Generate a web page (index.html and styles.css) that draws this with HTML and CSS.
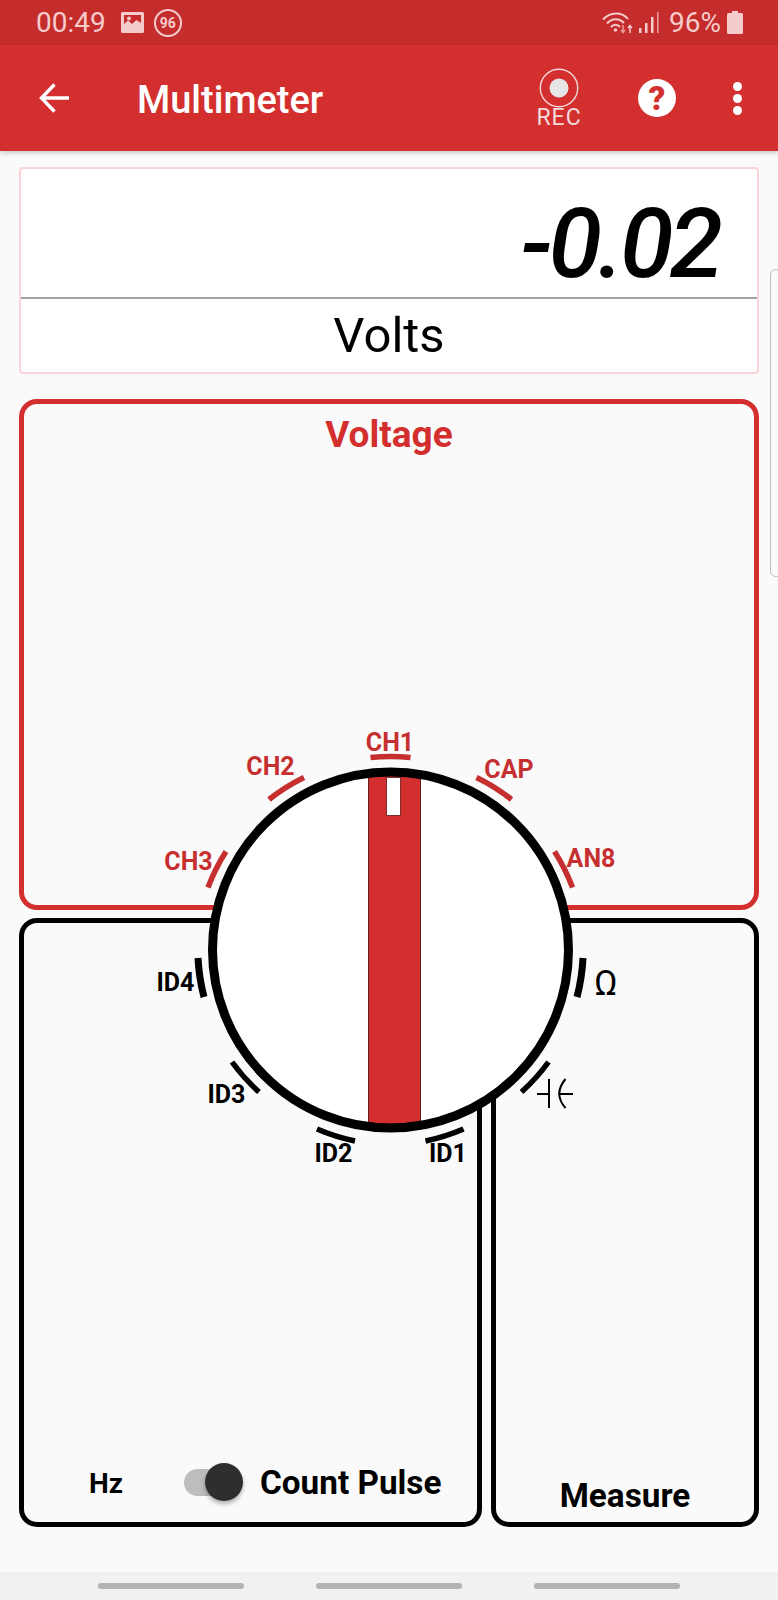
FILE: index.html
```html
<!DOCTYPE html>
<html lang="en">

<head>
    <meta charset="UTF-8">
    <link rel="stylesheet" href="styles.css">
    <title>Multimeter</title>
</head>

<body>
    <div class="status-bar">
        <div class="status-left">
            <span class="clock">00:49</span>
            <svg class="pic-icon" width="23" height="21" viewBox="0 0 23 21">
                <path d="M1.5 0H21.5Q23 0 23 1.5V19.5Q23 21 21.5 21H1.5Q0 21 0 19.5V1.5Q0 0 1.5 0ZM3 3V12L7 8.5L11 12L15.5 8L20 11V3Z" fill="#F6CBCB" fill-rule="evenodd"/>
                <circle cx="8" cy="6.5" r="2" fill="#F6CBCB"/>
            </svg>
            <span class="badge">96</span>
        </div>
        <div class="status-right">
            <svg width="32" height="22" viewBox="0 0 32 22" fill="none" stroke="#F6CBCB">
                <path d="M1 7.5C8 -0.5 20 -0.5 26 7" stroke-width="2"/>
                <path d="M5 11.5C10 6 17 6 22 11" stroke-width="2"/>
                <path d="M9 15C11.5 12 15.5 12 18 15" stroke-width="2"/>
                <circle cx="13.5" cy="18" r="1.8" fill="#F6CBCB" stroke="none"/>
                <path d="M21 13V20M19 18L21 20.5L23 18" stroke="#E89A9A" stroke-width="1.5"/>
                <path d="M28 21V14M26 16L28 13.5L30 16" stroke="#F6CBCB" stroke-width="1.5"/>
            </svg>
            <svg class="signal" width="20" height="21" viewBox="0 0 20 21">
                <rect x="0" y="16" width="2.5" height="5" fill="#F6CBCB"/>
                <rect x="6" y="11" width="2.5" height="10" fill="#F6CBCB"/>
                <rect x="12" y="5" width="2.5" height="16" fill="#F6CBCB"/>
                <rect x="18" y="0" width="1.6" height="21" fill="#E89A9A"/>
            </svg>
            <span class="battery-text">96%</span>
            <svg width="16" height="23" viewBox="0 0 16 23">
                <path d="M5 0H11V2H14.5Q16 2 16 3.5V21.5Q16 23 14.5 23H1.5Q0 23 0 21.5V3.5Q0 2 1.5 2H5Z" fill="#F6CBCB"/>
            </svg>
        </div>
    </div>

    <header class="toolbar">
        <svg class="back-icon" width="30" height="30" viewBox="0 0 30 30" fill="none" stroke="#fff" stroke-width="3.4">
            <path d="M30 15H3M15.5 1.5L2.5 15L15.5 28.5"/>
        </svg>
        <h1 class="title">Multimeter</h1>
        <div class="rec">
            <svg width="40" height="40" viewBox="0 0 40 40">
                <circle cx="20" cy="20" r="18.7" fill="none" stroke="#F4DADA" stroke-width="1.4"/>
                <circle cx="20" cy="20" r="9.5" fill="#E6E6E6"/>
            </svg>
            <span class="rec-text">REC</span>
        </div>
        <div class="help">?</div>
        <div class="more">
            <span class="dot"></span>
            <span class="dot"></span>
            <span class="dot"></span>
        </div>
    </header>

    <main class="content">
        <section class="display">
            <div class="reading">-0.02</div>
            <div class="unit">Volts</div>
        </section>

        <section class="panel panel-voltage">
            <h2 class="panel-title">Voltage</h2>
        </section>

        <div class="lower">
            <section class="panel panel-freq">
                <span class="hz">Hz</span>
                <div class="switch">
                    <span class="switch-track"></span>
                    <span class="switch-thumb"></span>
                </div>
                <span class="count">Count Pulse</span>
            </section>
            <section class="panel panel-measure">
                <span class="measure">Measure</span>
            </section>
        </div>

        <svg class="dial" width="500" height="460" viewBox="140 720 500 460">
            <defs>
                <clipPath id="knob-clip">
                    <circle cx="390.5" cy="950" r="176"/>
                </clipPath>
            </defs>

            <circle cx="390.5" cy="950" r="178" fill="#fff"/>
            <g clip-path="url(#knob-clip)">
                <rect x="368.5" y="760" width="52" height="380" fill="#D32F2F" stroke="#5c2020" stroke-width="1"/>
            </g>
            <rect x="386.5" y="777.5" width="14" height="38" fill="#fff" stroke="#7a3030" stroke-width="1"/>
            <circle cx="390.5" cy="950" r="178" fill="none" stroke="#000" stroke-width="9"/>
            <path d="M368 1122Q390 1126 421 1121L421 1130L368 1130Z" fill="#000"/>

            <g class="ticks-red">
                <path d="M370.5 757.5A193 193 0 0 1 410.5 757.5"/>
                <path d="M269 799.5A193 193 0 0 1 304 777.5"/>
                <path d="M476.5 777.5A193 193 0 0 1 511.5 799.5"/>
                <path d="M554.5 851.5A193 193 0 0 1 572.5 887.5"/>
                <path d="M208 887.5A193 193 0 0 1 226 851.5"/>
            </g>
            <g class="ticks-black">
                <path class="wide" d="M198 958A193 193 0 0 0 204 997"/>
                <path class="wide" d="M583 958A193 193 0 0 1 577 997"/>
                <path d="M232 1062A193 193 0 0 0 259 1092"/>
                <path d="M548.5 1062A193 193 0 0 1 521.5 1092"/>
                <path d="M317 1129A193 193 0 0 0 355 1141"/>
                <path d="M463.5 1129A193 193 0 0 1 425.5 1141"/>
            </g>

            <text class="dial-label red" x="390" y="751">CH1</text>
            <text class="dial-label red" x="270.5" y="775">CH2</text>
            <text class="dial-label red" x="509" y="778">CAP</text>
            <text class="dial-label red" x="188.5" y="870">CH3</text>
            <text class="dial-label red" x="591" y="867">AN8</text>
            <text class="dial-label" x="175.5" y="991">ID4</text>
            <text class="dial-label" x="226.5" y="1103">ID3</text>
            <text class="dial-label" x="333.5" y="1162">ID2</text>
            <text class="dial-label" x="448" y="1162">ID1</text>
            <text class="ohm" x="606" y="995">Ω</text>

            <g fill="none" stroke="#000" stroke-width="2">
                <path d="M537 1094H549M549 1079V1108"/>
                <path d="M565.5 1079Q553 1094 565.5 1108M560 1094H573"/>
            </g>
        </svg>

        <div class="side-handle"></div>
    </main>

    <div class="nav-bar">
        <span class="nav-pill"></span>
        <span class="nav-pill"></span>
        <span class="nav-pill"></span>
    </div>
</body>

</html>
```

FILE: styles.css
```css
html,
body {
    margin: 0;
    padding: 0;
}

body {
    width: 778px;
    height: 1600px;
    display: flex;
    flex-direction: column;
    overflow: hidden;
    background-color: #FAFAFA;
    font-family: Roboto, sans-serif;
    color: #000;
}

.status-bar {
    height: 45px;
    flex: none;
    display: flex;
    justify-content: space-between;
    align-items: center;
    padding: 0 35px 0 36px;
    background-color: #C52C2C;
    color: #F6CBCB;
    box-sizing: border-box;
}

.status-left,
.status-right {
    display: flex;
    align-items: center;
}

.clock {
    font-size: 28px;
    line-height: 45px;
    margin-right: 15px;
}

.badge {
    width: 28px;
    height: 28px;
    margin-left: 10px;
    box-sizing: border-box;
    border: 2px solid #F6CBCB;
    border-radius: 50%;
    font-size: 14px;
    font-weight: 700;
    line-height: 24px;
    text-align: center;
}

.signal {
    margin-left: 5px;
}

.battery-text {
    font-size: 28px;
    line-height: 45px;
    margin: 0 6px 0 10px;
}

.toolbar {
    height: 106px;
    flex: none;
    display: flex;
    align-items: center;
    position: relative;
    z-index: 2;
    padding-left: 39px;
    background-color: #D32F2F;
    box-shadow: 0 2px 5px rgba(0, 0, 0, 0.2);
}

.back-icon {
    margin-right: 68px;
}

.title {
    width: 216px;
    margin: 4px 0 0 0;
    font-size: 38px;
    font-weight: 500;
    color: #fff;
}

.rec {
    width: 48px;
    margin-left: 182px;
    display: flex;
    flex-direction: column;
    align-items: center;
}

.rec svg {
    display: block;
}

.rec-text {
    font-size: 23px;
    line-height: 20px;
    letter-spacing: 1px;
    color: #F4DADA;
}

.help {
    width: 38px;
    height: 38px;
    margin-left: 55px;
    border-radius: 50%;
    background-color: #fff;
    color: #D32F2F;
    font-size: 33px;
    font-weight: 900;
    line-height: 39px;
    text-align: center;
}

.more {
    margin-left: 57px;
    display: flex;
    flex-direction: column;
    gap: 3px;
}

.dot {
    width: 9px;
    height: 9px;
    border-radius: 50%;
    background-color: #fff;
}

.content {
    flex: 1;
    position: relative;
    padding: 16px 19px 0;
}

.display {
    height: 207px;
    box-sizing: border-box;
    border: 2px solid #F9D3D8;
    border-radius: 4px;
    background-color: #fff;
}

.reading {
    height: 130px;
    box-sizing: border-box;
    padding-right: 38px;
    border-bottom: 2px solid #A3A3A3;
    font-size: 97px;
    font-style: italic;
    font-weight: 500;
    line-height: 150px;
    letter-spacing: -4px;
    text-align: right;
}

.unit {
    font-size: 49px;
    line-height: 73px;
    text-align: center;
}

.panel {
    box-sizing: border-box;
    border: 5px solid #000;
    border-radius: 18px;
}

.panel-voltage {
    height: 511px;
    margin-top: 25px;
    border-color: #D32F2F;
}

.panel-title {
    margin: 10px 0 0;
    font-size: 37px;
    font-weight: 700;
    line-height: 42px;
    text-align: center;
    color: #D32F2F;
}

.lower {
    display: flex;
    gap: 9px;
    margin-top: 8px;
}

.panel-freq {
    width: 463px;
    height: 609px;
    display: flex;
    align-items: flex-end;
    padding: 0 0 19px 65px;
}

.panel-measure {
    flex: 1;
    height: 609px;
    display: flex;
    justify-content: center;
    align-items: flex-end;
    padding-bottom: 6px;
}

.hz {
    font-size: 28px;
    font-weight: 700;
    line-height: 38px;
}

.switch {
    width: 59px;
    height: 38px;
    margin: 0 17px 0 61px;
    display: flex;
    align-items: center;
    position: relative;
    top: -2px;
}

.switch-track {
    width: 44px;
    height: 27px;
    border-radius: 14px;
    background-color: #BDBDBD;
}

.switch-thumb {
    position: absolute;
    right: 0;
    top: 0;
    width: 38px;
    height: 38px;
    border-radius: 50%;
    background-color: #2E2E30;
    box-shadow: 0 3px 4px rgba(0, 0, 0, 0.3);
}

.count,
.measure {
    font-size: 33.3px;
    font-weight: 700;
    line-height: 40px;
}

.dial {
    position: absolute;
    left: 140px;
    top: 569px;
}

.ticks-red,
.ticks-black {
    fill: none;
    stroke-width: 5.5;
}

.ticks-red {
    stroke: #C62F2F;
}

.ticks-black {
    stroke: #000;
}

.ticks-black .wide {
    stroke-width: 7;
}

.dial-label {
    font-family: Roboto, sans-serif;
    font-size: 25px;
    font-weight: 700;
    text-anchor: middle;
    fill: #000;
}

.dial-label.red {
    fill: #C62F2F;
}

.ohm {
    font-family: Roboto, sans-serif;
    font-size: 35px;
    text-anchor: middle;
}

.side-handle {
    position: absolute;
    left: 770px;
    top: 118px;
    width: 12px;
    height: 308px;
    box-sizing: border-box;
    border: 1.5px solid #BDBDBD;
    border-radius: 9px;
    background-color: #FAFAFA;
}

.nav-bar {
    height: 28px;
    flex: none;
    display: flex;
    gap: 72px;
    align-items: center;
    box-sizing: border-box;
    padding: 0 0 0 98px;
    background-color: #F1F1F1;
}

.nav-pill {
    width: 146px;
    height: 6px;
    border-radius: 3px;
    background-color: #B3B3B3;
}
```
